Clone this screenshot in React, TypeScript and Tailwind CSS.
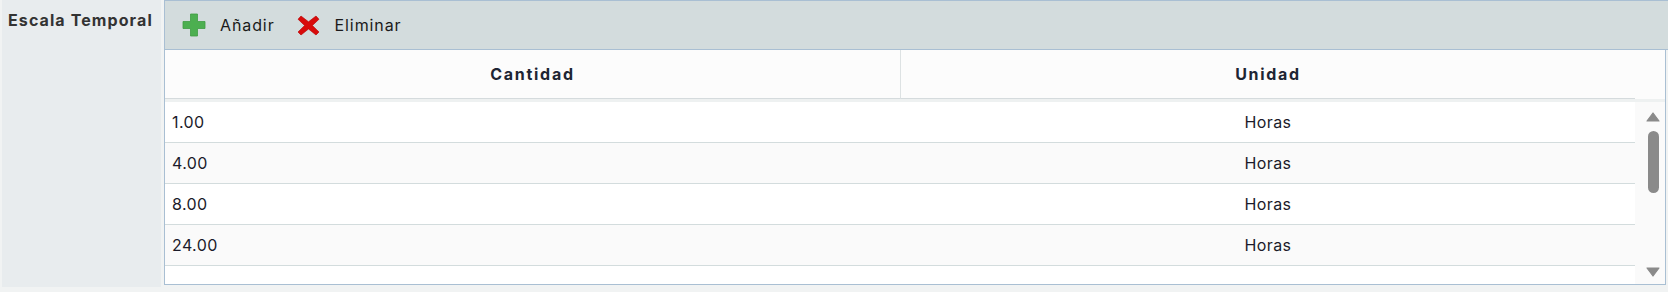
import React from 'react'

const rows = [
  { cantidad: '1.00', unidad: 'Horas' },
  { cantidad: '4.00', unidad: 'Horas' },
  { cantidad: '8.00', unidad: 'Horas' },
  { cantidad: '24.00', unidad: 'Horas' },
]

function PlusIcon() {
  return (
    <svg width="24" height="24" viewBox="0 0 24 24" className="shrink-0">
      <path d="M8.5 1h7v7.5H23v7h-7.5V23h-7v-7.5H1v-7h7.5z" fill="#4caf50" stroke="#3f9d43" strokeWidth="0.8" />
    </svg>
  )
}

function CrossIcon() {
  return (
    <svg width="23" height="21" viewBox="0 0 23 21" className="shrink-0">
      <path d="M4 1l7.5 5.8L19 1l3 3.2-6.6 6.3L22 17l-3 3-7.5-6L4 20l-3-3 6.6-6.5L1 4.2z" fill="#d80b0b" stroke="#b80000" strokeWidth="0.6" />
    </svg>
  )
}

export default function App() {
  return (
    <div className="w-[1668px] h-[292px] bg-[#f1f3f3] flex pl-[2px] text-[16px] font-['Inter',sans-serif] overflow-hidden">
      {/* Label */}
      <div className="w-[159px] h-[287px] bg-[#e8ecee] pl-[6px] pt-[8px] font-bold text-[#333] tracking-[1.1px] whitespace-nowrap">
        Escala Temporal
      </div>

      {/* Grid panel */}
      <div className="ml-[3px] flex-1 h-[285px] flex flex-col border-l border-[#a9bfd3]">
        {/* Toolbar */}
        <div className="h-[50px] shrink-0 bg-[#d3dcdd] border-y border-[#a9bfd3] flex items-center pl-[17px] text-[#1a1a1a] tracking-[0.9px]">
          <PlusIcon />
          <span className="ml-[14px]">Añadir</span>
          <span className="ml-[22px]"><CrossIcon /></span>
          <span className="ml-[15px]">Eliminar</span>
        </div>

        <div className="flex-1 flex flex-col border-r border-b border-[#a9bfd3] mr-[2px] min-h-0">
          {/* Header */}
          <div className="h-[52px] shrink-0 flex bg-[#fcfcfc] border-b-[3px] border-b-[#eef1f1] tracking-[1.7px]">
            <div className="h-[49px] w-[736px] border-r border-[#dde2e3] border-b border-b-[#d5dbdd] flex items-center justify-center font-bold text-[#1e2533]">
              Cantidad
            </div>
            <div className="h-[49px] w-[734px] border-b border-[#d5dbdd] flex items-center justify-center font-bold text-[#1e2533]">
              Unidad
            </div>
            <div className="flex-1 h-[49px]" />
          </div>

          {/* Body */}
          <div className="flex-1 flex min-h-0">
            <div className="w-[1470px] overflow-hidden tracking-[0.4px]">
              {rows.map((r, i) => (
                <div
                  key={r.cantidad}
                  className={`h-[41px] flex items-center border-b border-[#d3dcdd] text-[#1b1b2a] ${i % 2 === 1 ? 'bg-[#fafafa]' : 'bg-white'}`}
                >
                  <div className="w-[736px] pl-[7px]">{r.cantidad}</div>
                  <div className="w-[734px] text-center">{r.unidad}</div>
                </div>
              ))}
              <div className="h-[18px] bg-white" />
            </div>

            {/* Scrollbar */}
            <div className="flex-1 bg-[#fafafa] flex flex-col items-center pl-[6px] pt-[10px] pb-[7px]">
              <svg width="14" height="10" viewBox="0 0 14 10">
                <path d="M7 1L13 9H1z" fill="#8a8a8a" strokeLinejoin="round" stroke="#8a8a8a" strokeWidth="1.2" />
              </svg>
              <div className="mt-[9px] w-[11px] h-[62px] rounded-full bg-[#8a8a8a]" />
              <div className="flex-1" />
              <svg width="14" height="10" viewBox="0 0 14 10">
                <path d="M1 1H13L7 9z" fill="#8a8a8a" strokeLinejoin="round" stroke="#8a8a8a" strokeWidth="1.2" />
              </svg>
            </div>
          </div>
        </div>
      </div>
    </div>
  )
}
